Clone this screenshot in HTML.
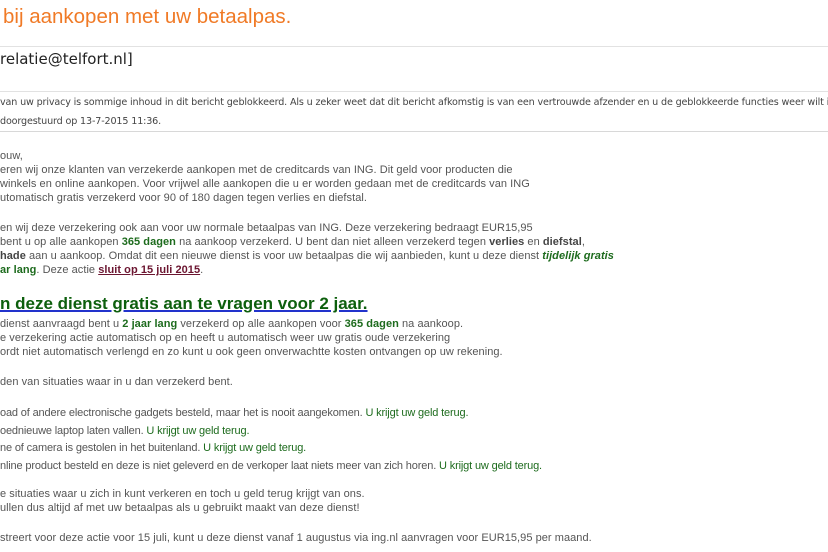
<!DOCTYPE html>
<html><head><meta charset="utf-8"><style>
html,body{margin:0;padding:0;background:#fff;width:828px;height:552px;overflow:hidden;position:relative}
.a{position:absolute;left:0;white-space:nowrap;max-width:828px;overflow:hidden}
.b{font-family:"Liberation Sans",Arial,sans-serif;font-size:11px;color:#555;line-height:14px;letter-spacing:0.05px}
.s{font-family:"DejaVu Sans","Liberation Sans",sans-serif;font-size:9.6px;color:#444;line-height:14px;letter-spacing:-0.15px}
.g{color:#1d6b1d;font-weight:bold}
.gl{color:#1d6b1d}
.c{font-family:"Liberation Sans",Arial,sans-serif;font-size:11px;color:#555;line-height:14px;letter-spacing:-0.15px}
.hr{position:absolute;left:0;width:828px;height:1px;background:#e2e2e2}
</style></head><body>
<div class="a" style="top:2px;left:3px;font-family:'Liberation Sans',Arial,sans-serif;font-size:20.5px;color:#f07a26;line-height:30px;">bij aankopen met uw betaalpas.</div>
<div class="hr" style="top:46px"></div>
<div class="a" style="top:48px;font-family:'DejaVu Sans','Liberation Sans',sans-serif;font-size:15px;color:#222;line-height:22px;">relatie@telfort.nl]</div>
<div class="hr" style="top:91px"></div>
<div class="a s" style="top:96px">van uw privacy is sommige inhoud in dit bericht geblokkeerd. Als u zeker weet dat dit bericht afkomstig is van een vertrouwde afzender en u de geblokkeerde functies weer wilt inschakelen</div>
<div class="a s" style="top:115px">doorgestuurd op 13-7-2015 11:36.</div>
<div class="hr" style="top:131px;background:#d8d8d8"></div>

<div class="a b" style="top:149px">ouw,</div>
<div class="a b" style="top:163px">eren wij onze klanten van verzekerde aankopen met de creditcards van ING. Dit geld voor producten die</div>
<div class="a b" style="top:177px">winkels en online aankopen. Voor vrijwel alle aankopen die u er worden gedaan met de creditcards van ING</div>
<div class="a b" style="top:191px">utomatisch gratis verzekerd voor 90 of 180 dagen tegen verlies en diefstal.</div>

<div class="a b" style="top:221px">en wij deze verzekering ook aan voor uw normale betaalpas van ING. Deze verzekering bedraagt EUR15,95</div>
<div class="a b" style="top:235px">bent u op alle aankopen <span class="g">365 dagen</span> na aankoop verzekerd. U bent dan niet alleen verzekerd tegen <b style="color:#444">verlies</b> en <b style="color:#444">diefstal</b>,</div>
<div class="a b" style="top:249px"><b style="color:#444">hade</b> aan u aankoop. Omdat dit een nieuwe dienst is voor uw betaalpas die wij aanbieden, kunt u deze dienst <i class="g">tijdelijk gratis</i></div>
<div class="a b" style="top:263px"><span class="g">ar lang</span>. Deze actie <b style="color:#6b1530;text-decoration:underline">sluit op 15 juli 2015</b>.</div>

<div class="a" style="top:293px;font-family:'Liberation Sans',Arial,sans-serif;font-size:17px;font-weight:bold;color:#0d5f0d;line-height:22px;text-decoration:underline;text-decoration-color:#2233cc;text-decoration-thickness:2px;">n deze dienst gratis aan te vragen voor 2 jaar.</div>
<div class="a b" style="top:317px">dienst aanvraagd bent u <span class="g">2 jaar lang</span> verzekerd op alle aankopen voor <span class="g">365 dagen</span> na aankoop.</div>
<div class="a b" style="top:331px">e verzekering actie automatisch op en heeft u automatisch weer uw gratis oude verzekering</div>
<div class="a b" style="top:345px">ordt niet automatisch verlengd en zo kunt u ook geen onverwachtte kosten ontvangen op uw rekening.</div>

<div class="a b" style="top:375px">den van situaties waar in u dan verzekerd bent.</div>
<div class="a c" style="top:406px">oad of andere electronische gadgets besteld, maar het is nooit aangekomen. <span class="gl">U krijgt uw geld terug.</span></div>
<div class="a c" style="top:424px">oednieuwe laptop laten vallen. <span class="gl">U krijgt uw geld terug.</span></div>
<div class="a c" style="top:441px">ne of camera is gestolen in het buitenland. <span class="gl">U krijgt uw geld terug.</span></div>
<div class="a c" style="top:459px">nline product besteld en deze is niet geleverd en de verkoper laat niets meer van zich horen. <span class="gl">U krijgt uw geld terug.</span></div>

<div class="a b" style="top:487px">e situaties waar u zich in kunt verkeren en toch u geld terug krijgt van ons.</div>
<div class="a b" style="top:501px">ullen dus altijd af met uw betaalpas als u gebruikt maakt van deze dienst!</div>
<div class="a b" style="top:531px">streert voor deze actie voor 15 juli, kunt u deze dienst vanaf 1 augustus via ing.nl aanvragen voor EUR15,95 per maand.</div>
</body></html>
